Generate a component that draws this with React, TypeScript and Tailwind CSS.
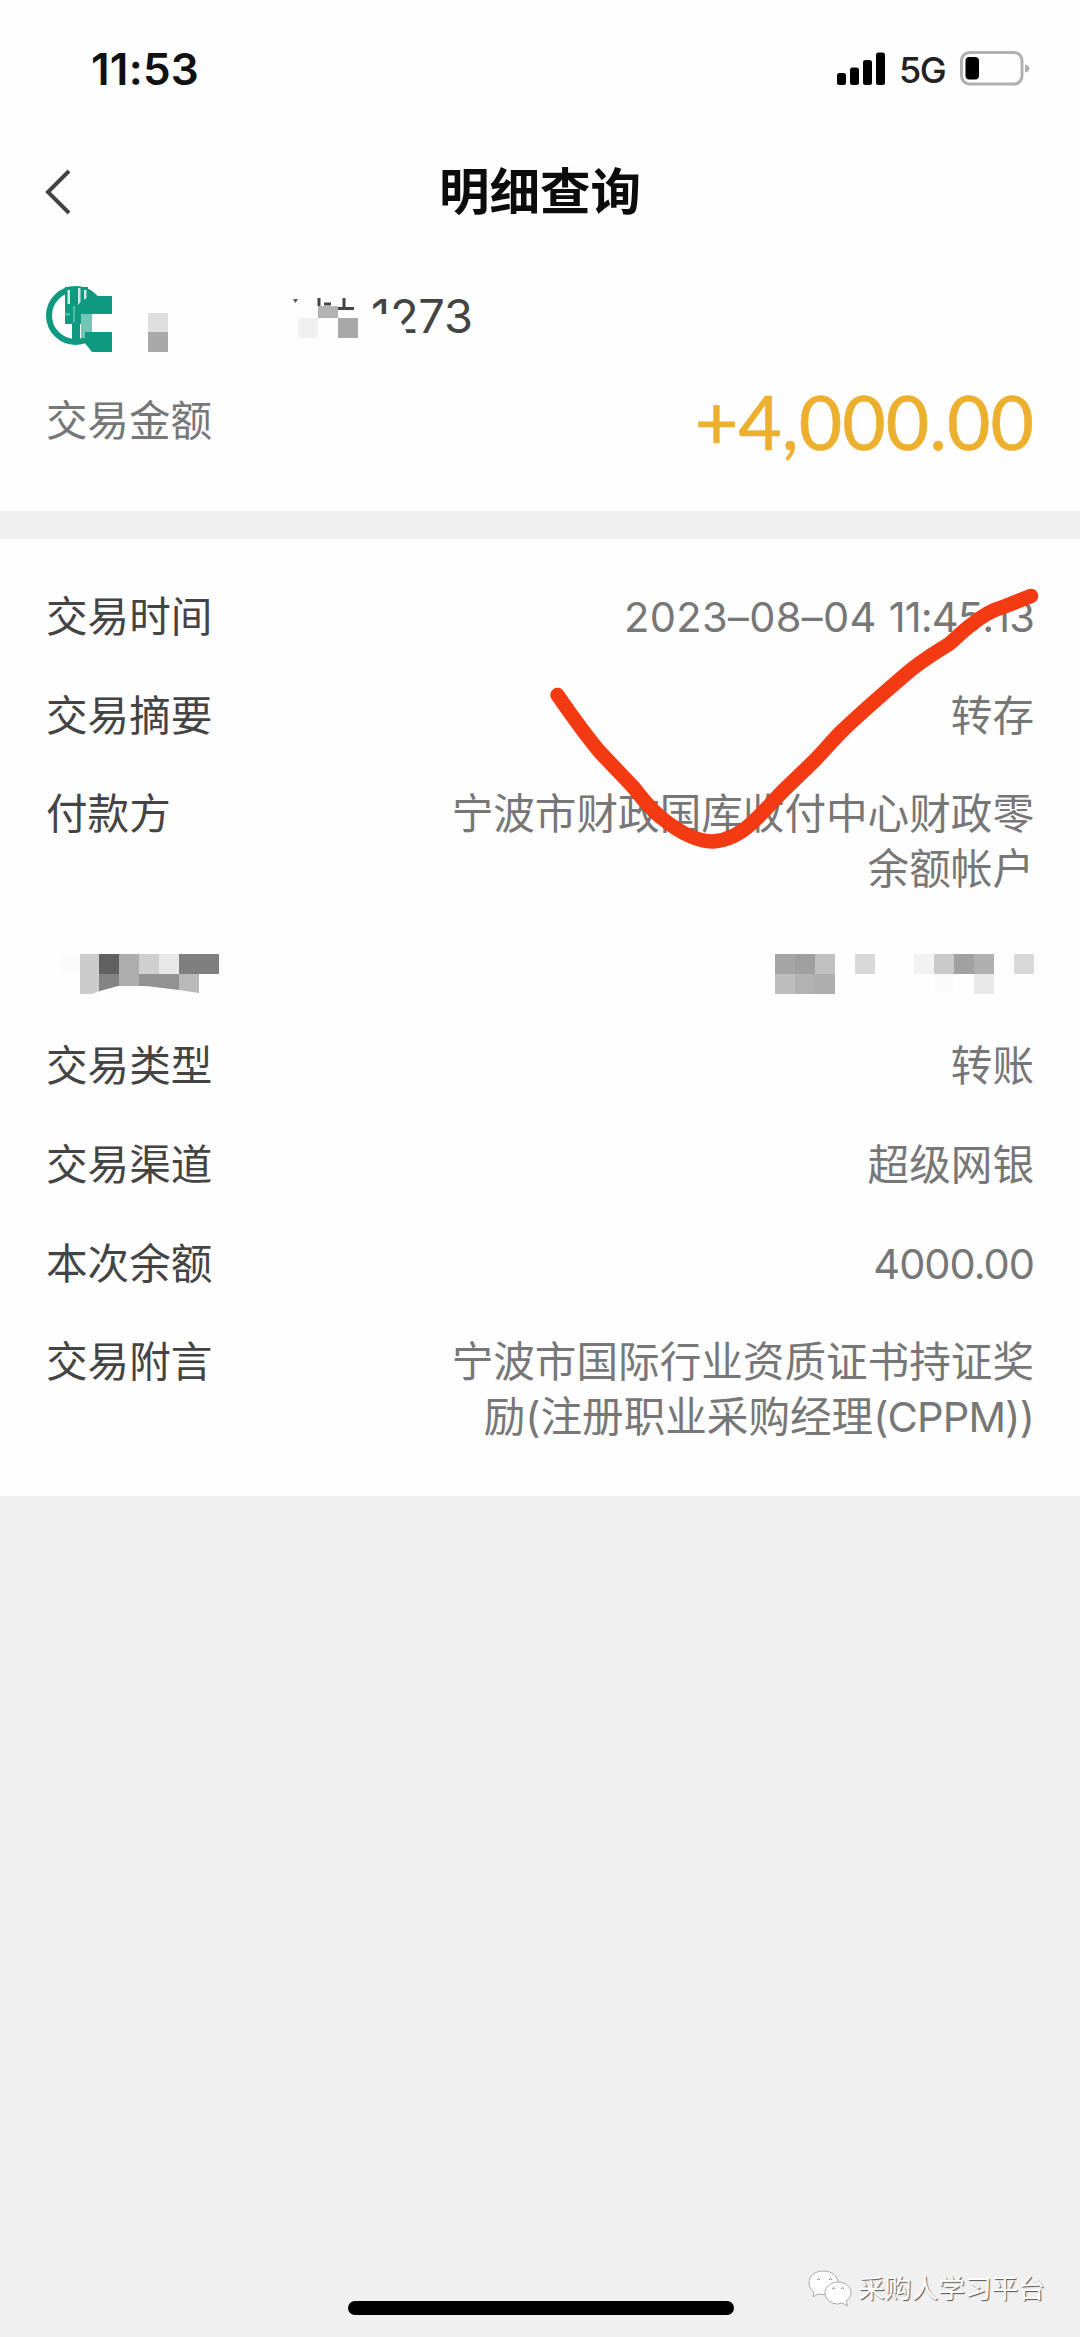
type Block = { x: number; y: number; w?: number; h?: number; fill: string };

// Pixelated squares that cover the account holder
const NAME_BLOCKS: Block[] = [
    { x: 14, y: 0, fill: "#fafafa" },
    { x: 34, y: 0, h: 40, fill: "#cccccc" },
    { x: 53, y: 0, fill: "#616161" },
    { x: 53, y: 20, fill: "#848484" },
    { x: 73, y: 0, h: 40, fill: "#adadad" },
    { x: 93, y: 0, fill: "#cfcfcf" },
    { x: 113, y: 0, fill: "#e8e8e8" },
    { x: 93, y: 20, w: 40, fill: "#939393" },
    { x: 133, y: 0, w: 40, fill: "#7f7f7f" },
    { x: 133, y: 20, fill: "#b9b9b9" },
];

const ACCOUNT_BLOCKS: Block[] = [
    { x: 0, y: 0, fill: "#a5a5a5" },
    { x: 20, y: 0, fill: "#9f9f9f" },
    { x: 40, y: 0, fill: "#c0c0c0" },
    { x: 0, y: 20, fill: "#bebebe" },
    { x: 20, y: 20, fill: "#b2b2b2" },
    { x: 40, y: 20, fill: "#adadad" },
    { x: 80, y: 0, fill: "#d9d9d9" },
    { x: 139, y: 0, fill: "#f2f2f2" },
    { x: 159, y: 0, fill: "#cacaca" },
    { x: 179, y: 0, fill: "#a1a1a1" },
    { x: 199, y: 0, fill: "#b0b0b0" },
    { x: 199, y: 20, fill: "#e8e8e8" },
    { x: 159, y: 20, fill: "#fbfbfb" },
    { x: 239, y: 0, fill: "#d9d9d9" },
];

function Blocks({ items }: { items: Block[] }) {
    return (
        <>
            {items.map((b, i) => (
                <rect key={i} x={b.x} y={b.y} width={b.w ?? 20} height={b.h ?? 20} fill={b.fill} />
            ))}
        </>
    );
}

function StatusBar() {
    return (
        <div className="flex h-[138px] items-start justify-between pt-[43px] pr-[49px] pl-[91px]">
            <span className="text-[44px] leading-[52px] font-semibold tracking-[0.005em] text-[#111]">11:53</span>
            <div className="flex items-start">
                <svg width="48" height="33" viewBox="0 0 48 33" className="mt-[9px]" fill="#000">
                    <rect x="0" y="21" width="9" height="12" rx="2.5" />
                    <rect x="13" y="15.500" width="9" height="17.500" rx="2.5" />
                    <rect x="26" y="8" width="9" height="25" rx="2.5" />
                    <rect x="39" y="0.500" width="9" height="32.500" rx="2.5" />
                </svg>
                <span className="mt-[5px] ml-[14px] w-[48px] text-[36px] leading-[44px] font-medium tracking-[-0.04em] text-[#222]">5G</span>
                <svg width="71" height="35" viewBox="0 0 71 35" className="mt-[8px] ml-[13px]">
                    <rect x="1.500" y="1.500" width="60.500" height="31.500" rx="8" fill="none" stroke="#b0b0b0" strokeWidth="3" />
                    <rect x="5.500" y="6" width="13.500" height="22.500" rx="4" fill="#000" />
                    <path d="M65 13.500c6 1 6 7 0 8z" fill="#b0b0b0" />
                </svg>
            </div>
        </div>
    );
}

function BankLogo() {
    return (
        <svg width="66" height="66" viewBox="0 0 66 66">
            <circle cx="29.500" cy="29.500" r="26.500" fill="none" stroke="#0d9a80" strokeWidth="6" />
            <path d="M46 28H66V46H46z" fill="#fefefe" />
            <path d="M43 3 51 10H66V28H32V16z" fill="#0d9a80" />
            <path d="M39 46H66V66H46L38 56z" fill="#0d9a80" />
            <path d="M19 1H42V20H36V38H19z" fill="#0d9a80" />
            <path d="M26 36H34V58H26z" fill="#0d9a80" />
            <path d="M35 28H46V46H39V52H35z" fill="#74c5b6" />
            <path d="M21.500 4H24V18H21.500zM32 2H34.500V16L32 19zM38 4H40.500V12L38 14z" fill="#c9ebe4" />
            <path d="M19 27H24V29.500H19zM27 20H29V36H27z" fill="#56b8a5" />
        </svg>
    );
}

function Row({ label, value }: { label: string; value: React.ReactNode }) {
    return (
        <div className="flex items-start justify-between">
            <span className="text-[#444]">{label}</span>
            <span className="text-right text-[#777]">{value}</span>
        </div>
    );
}

export default function App() {
    return (
        <div className="relative flex h-[2337px] w-[1080px] flex-col overflow-hidden bg-[#f0f0f0] font-['Inter','Noto_Sans_CJK_SC',sans-serif]">
            <div className="h-[511px] bg-[#fefefe]">
                <StatusBar />
                <header className="flex h-[108px] items-center pl-[44px]">
                    <svg width="28" height="48" viewBox="0 0 28 48" fill="none" stroke="#444" strokeWidth="4">
                        <path d="M25 3 4 24 25 45" />
                    </svg>
                    <h1 className="mr-[72px] flex-1 text-center text-[50.500px] leading-[60px] font-bold text-[#0c0c0c]">明细查询</h1>
                </header>

                <div className="mt-[40px] flex h-[66px] items-start pl-[46px]">
                    <BankLogo />
                    <svg width="20" height="39" className="mt-[27px] ml-[36px]">
                        <rect width="20" height="19" fill="#dedede" />
                        <rect y="19" width="20" height="20" fill="#a9a9a9" />
                    </svg>
                    <svg width="68" height="45" className="mt-[9px] ml-[124px]">
                        <path d="M1 4h5l-2.500 4z" fill="#555" />
                        <path d="M27 3v8M52 3v10M42 13.500H62M32 9h7" stroke="#444" strokeWidth="3" />
                        <rect x="6" y="23" width="20" height="20" fill="#f0f0f0" />
                        <rect x="26" y="11" width="20" height="12" fill="#b2b2b2" />
                        <rect x="46" y="23" width="20" height="20" fill="#a8a8a8" />
                    </svg>
                    <div className="relative ml-[11px] pt-[2px] text-[47px] leading-[56px] tracking-[-0.005em] text-[#444]">
                        1273
                        <svg width="50" height="44" className="absolute top-[14px] left-0">
                            <path d="M0 14H17L21 11 30 22 34 28 36 34V44H0z" fill="#fefefe" />
                        </svg>
                    </div>
                </div>

                <div className="flex items-center justify-between pt-[24px] pr-[46px] pl-[46px]">
                    <span className="text-[41.500px] leading-[56px] text-[#777]">交易金额</span>
                    <span className="font-['Lato','Noto_Sans_CJK_SC',sans-serif] text-[75px] leading-[90px] text-[#ecb02e] [-webkit-text-stroke:0.6px_#ecb02e]">+4,000.00</span>
                </div>
            </div>

            <main className="relative mt-[28px] flex h-[957px] flex-col gap-[43.600px] bg-[#fefefe] px-[46px] pt-[51px] text-[41.600px] leading-[55px]">
                <Row
                    label="交易时间"
                    value={<><span className="tracking-[0.008em]">2023–08–04 </span><span className="tracking-[-0.022em]">11:45:13</span></>}
                />
                <Row label="交易摘要" value="转存" />
                <Row label="付款方" value={<>宁波市财政国库收付中心财政零<br />余额帐户</>} />
                <div className="flex h-[55px] items-start justify-between pt-[13px]">
                    <svg width="174" height="41">
                        <Blocks items={NAME_BLOCKS} />
                        <path d="M44 41 54 37 72 32 100 32 133 36 153 39V41z" fill="#fefefe" />
                    </svg>
                    <svg width="259" height="40">
                        <Blocks items={ACCOUNT_BLOCKS} />
                    </svg>
                </div>
                <Row label="交易类型" value="转账" />
                <Row label="交易渠道" value="超级网银" />
                <Row label="本次余额" value={<span className="tracking-[-0.025em]">4000.00</span>} />
                <Row
                    label="交易附言"
                    value={<>宁波市国际行业资质证书持证奖<br />励(注册职业采购经理<span className="tracking-[-0.02em]">(CPPM))</span></>}
                />

                {/* Hand-drawn check mark over the rows */}
                <svg width="500" height="270" viewBox="540 580 500 270" className="pointer-events-none absolute top-[41px] left-[540px]">
                    <path
                        d="M557.500 695C572 716 584 733 599 751C611 764 622 775 634 788C644 801 652 811 663 819Q690 841 713 841.500Q734 840 752 823C764 812 774 800 784 790L813 762C822 753 832 741 842 731C862 712 885 692 906 674C921 661 935 653 949 644C957 637 963 631 971 625Q988 611 1003 607L1031 596"
                        fill="none"
                        stroke="#f43a12"
                        strokeWidth="14.500"
                        strokeLinecap="round"
                        strokeLinejoin="round"
                    />
                </svg>
            </main>

            <footer className="relative mt-auto flex h-[77px] items-start justify-end pr-[35px]">
                <div className="absolute top-[41px] left-[348px] h-[14px] w-[386px] rounded-full bg-black" />
                <svg width="44" height="36" viewBox="0 0 44 36" className="mt-[10px] mr-[6px]" fill="#fff" stroke="#aaa" strokeWidth="1">
                    <path d="M15 1C7 1 1 6 1 13c0 4 2 7 5 9l-1 5 5-3c11 2 20-2 20-11C30 6 24 1 15 1z" />
                    <path d="M30 12c-7 0-13 5-13 11s6 11 13 11l4-1 6 3-2-5c3-2 5-5 5-8 0-6-6-11-13-11z" />
                    <path d="M9 10q2-3 3 0M21 10q2-3 3 0M24 19q2-3 3 0M33 19q2-3 3 0" fill="none" stroke="#888" />
                </svg>
                <span className="mt-[8px] text-[26.700px] leading-[40px] text-white [text-shadow:1px_1px_1px_#555]">采购人学习平台</span>
            </footer>
        </div>
    );
}
